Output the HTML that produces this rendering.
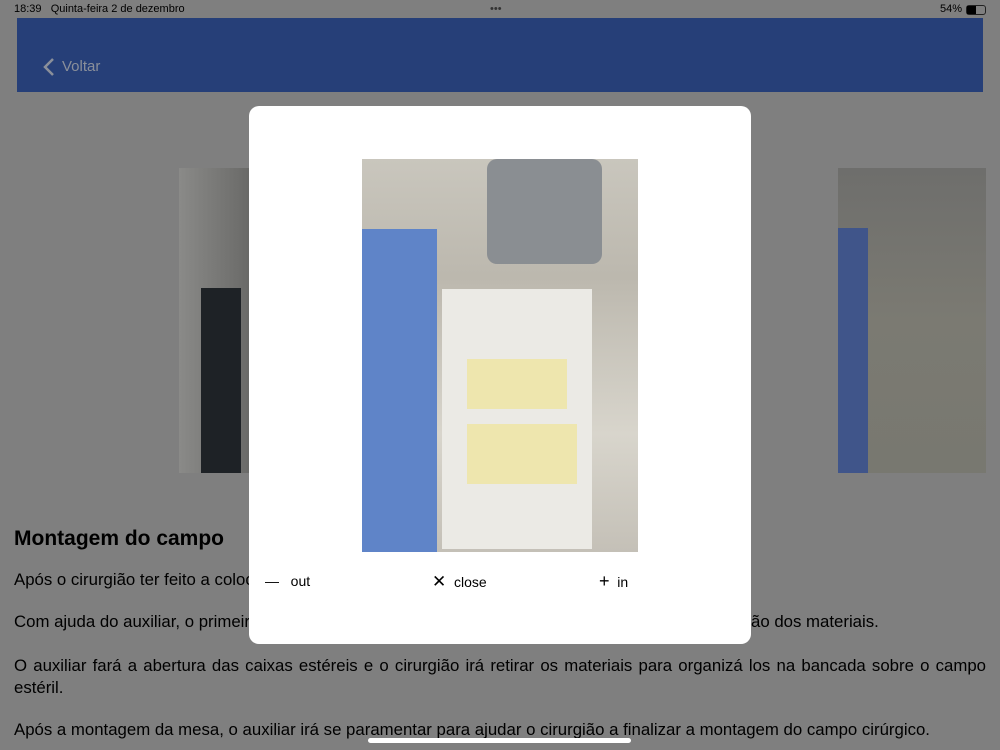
<!DOCTYPE html><html><head><style>
body{margin:0;width:1000px;height:750px;background:#7f7f7f;font-family:"Liberation Sans",sans-serif;position:relative;overflow:hidden;color:#000}
.a{position:absolute}
.t{font-size:16.8px;line-height:22px;color:#000}
</style></head><body>
<div class="a" style="left:14px;top:3px;font-size:11px;color:#000">18:39&nbsp;&nbsp; Quinta-feira 2 de dezembro</div>
<div class="a" style="left:490px;top:3px;font-size:11px;color:#333">•••</div>
<div class="a" style="left:940px;top:3px;font-size:11px">54%</div>
<div class="a" style="left:966px;top:5px;width:18px;height:8px;border:1px solid #222;border-radius:3px"><div style="width:9px;height:8px;background:#000"></div></div>
<div class="a" style="left:17px;top:18px;width:966px;height:74px;background:#263f78"></div>
<svg class="a" style="left:42px;top:57px" width="14" height="20"><path d="M11 2 L3 10 L11 18" stroke="#8a8f9a" stroke-width="2.5" fill="none"/></svg>
<div class="a" style="left:62px;top:58px;font-size:15px;color:#8a8f9a">Voltar</div>
<div class="a" style="left:179px;top:168px;width:70px;height:305px;background:linear-gradient(90deg,#8a8a88,#6a6a68)"><div style="position:absolute;left:22px;top:120px;width:40px;height:185px;background:#1e2226"></div></div>
<div class="a" style="left:838px;top:168px;width:148px;height:305px;background:linear-gradient(180deg,#6e6e6c,#7b7a72 50%,#787870)"><div style="position:absolute;left:0;top:60px;width:30px;height:245px;background:#40558a"></div></div>
<div class="a t" style="left:14px;top:528px;font-size:21px;font-weight:bold">Montagem do campo</div>
<div class="a t" style="left:14px;top:569px">Após o cirurgião ter feito a coloc</div>
<div class="a t" style="left:14px;top:611px">Com ajuda do auxiliar, o primeir</div>
<div class="a t" style="left:751px;top:611px">ão dos materiais.</div>
<div class="a t" style="left:14px;top:655px;width:972px;text-align:justify;text-align-last:left">O auxiliar fará a abertura das caixas estéreis e o cirurgião irá retirar os materiais para organizá los na bancada sobre o campo estéril.</div>
<div class="a t" style="left:14px;top:719px">Após a montagem da mesa, o auxiliar irá se paramentar para ajudar o cirurgião a finalizar a montagem do campo cirúrgico.</div>
<div class="a" style="left:368px;top:738px;width:263px;height:5px;border-radius:3px;background:#fff"></div>
<div class="a" style="left:249px;top:106px;width:502px;height:538px;background:#fff;border-radius:10px"></div>
<div class="a" style="left:362px;top:159px;width:276px;height:393px;background:linear-gradient(180deg,#c9c6bd,#bcb8ae 30%,#d8d5cc 70%,#c4c0b7)">
<div style="position:absolute;left:0;top:70px;width:75px;height:323px;background:#5f84c8"></div>
<div style="position:absolute;left:80px;top:130px;width:150px;height:260px;background:#ebeae5"></div>
<div style="position:absolute;left:105px;top:200px;width:100px;height:50px;background:#eee6ae"></div>
<div style="position:absolute;left:105px;top:265px;width:110px;height:60px;background:#eee6ae"></div>
<div style="position:absolute;left:125px;top:0;width:115px;height:105px;background:#8a8e92;border-radius:10px"></div>
</div>
<div class="a" style="left:265px;top:573px;font-size:14px">—&nbsp;&nbsp; out</div>
<div class="a" style="left:432px;top:572px;font-size:14px"><span style="font-size:17px">✕</span>&nbsp; close</div>
<div class="a" style="left:599px;top:571px;font-size:14px"><span style="font-size:18px">+</span>&nbsp;&nbsp;in</div>
</body></html>
